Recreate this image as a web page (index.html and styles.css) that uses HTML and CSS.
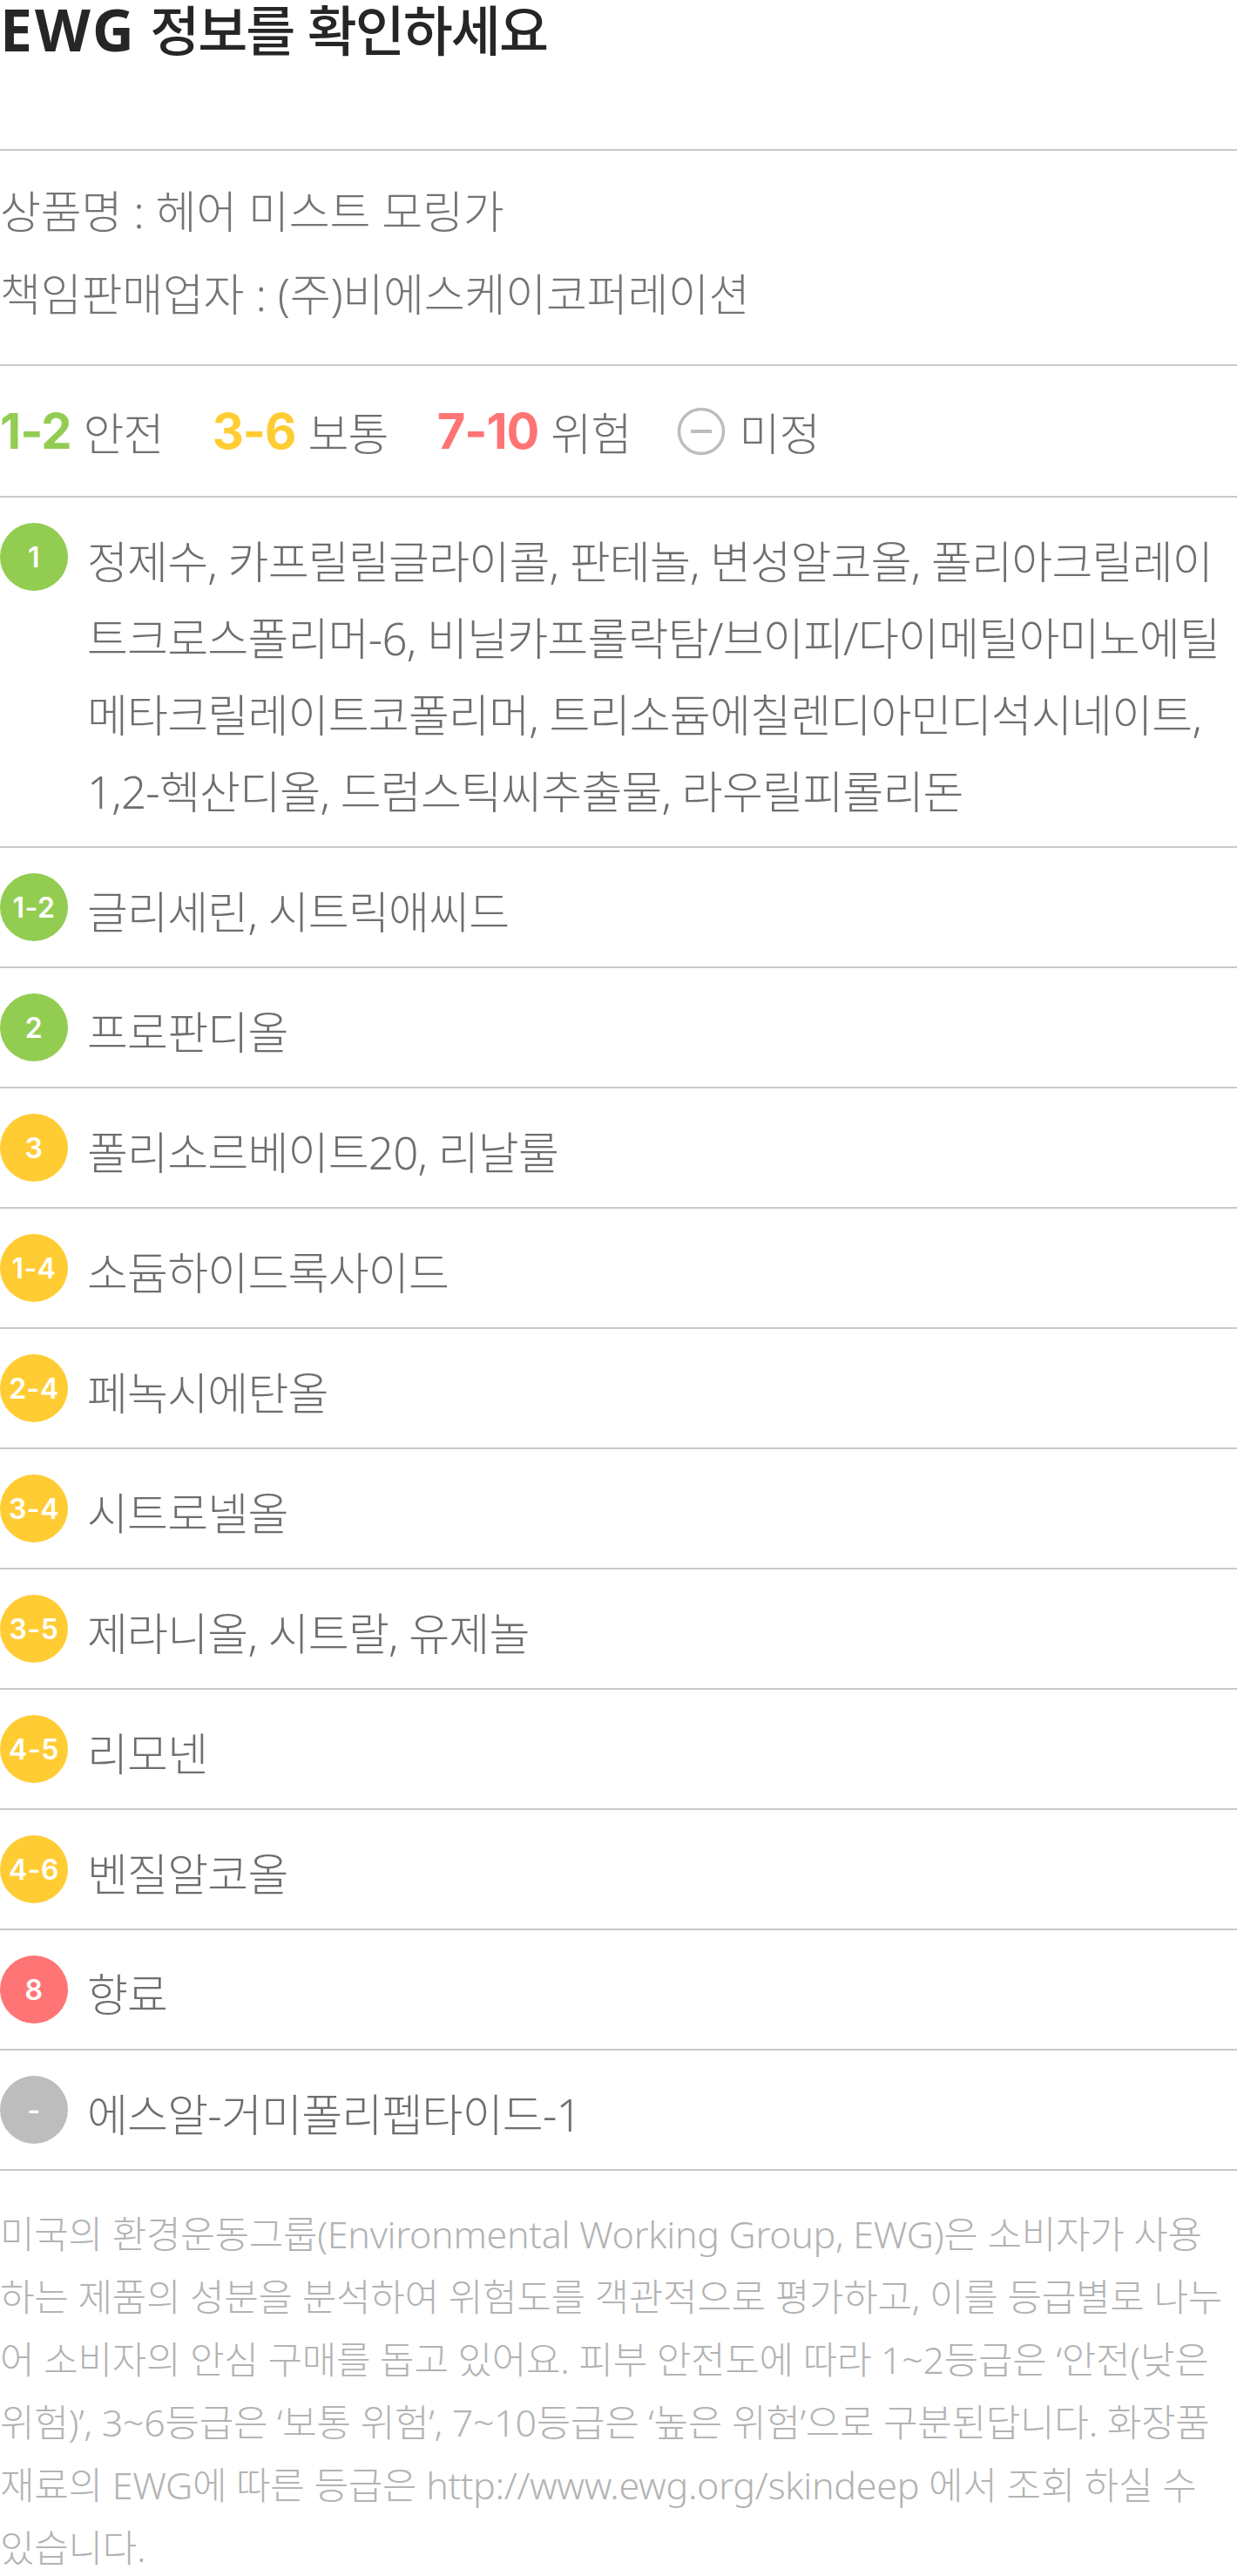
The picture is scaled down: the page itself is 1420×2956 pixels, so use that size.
FILE: index.html
```html
<!DOCTYPE html>
<html lang="ko">
<head>
    <meta charset="UTF-8">
    <meta name="viewport" content="width=device-width, initial-scale=1.0">
    <title>EWG 정보</title>
    <link rel="stylesheet" href="styles.css">
</head>
<body>
    <div class="ewg-page">
        <h1 class="ewg-title"><span class="ewg-title-en">EWG</span> 정보를 확인하세요</h1>

        <div class="product-info">
            <p>상품명 : 헤어 미스트 모링가</p>
            <p>책임판매업자 : (주)비에스케이코퍼레이션</p>
        </div>

        <div class="legend">
            <span class="legend-item"><b class="num green">1-2</b> 안전</span>
            <span class="legend-item"><b class="num yellow">3-6</b> 보통</span>
            <span class="legend-item"><b class="num red">7-10</b> 위험</span>
            <span class="legend-item">
                <svg class="legend-icon" width="56" height="56" viewBox="0 0 56 56">
                    <circle cx="28" cy="28" r="25.5" fill="none" stroke="#bdbdbd" stroke-width="3.5"/>
                    <line x1="16" y1="28" x2="40" y2="28" stroke="#bdbdbd" stroke-width="4"/>
                </svg>
                미정
            </span>
        </div>

        <ul class="ingredients">
            <li class="ing-row">
                <span class="badge bg-green">1</span>
                <p>정제수, 카프릴릴글라이콜, 판테놀, 변성알코올, 폴리아크릴레이트크로스폴리머-6, 비닐카프롤락탐/브이피/다이메틸아미노에틸메타크릴레이트코폴리머, 트리소듐에칠렌디아민디석시네이트, 1,2-헥산디올, 드럼스틱씨추출물, 라우릴피롤리돈</p>
            </li>
            <li class="ing-row">
                <span class="badge bg-green">1-2</span>
                <p>글리세린, 시트릭애씨드</p>
            </li>
            <li class="ing-row">
                <span class="badge bg-green">2</span>
                <p>프로판디올</p>
            </li>
            <li class="ing-row">
                <span class="badge bg-yellow">3</span>
                <p>폴리소르베이트20, 리날룰</p>
            </li>
            <li class="ing-row">
                <span class="badge bg-yellow">1-4</span>
                <p>소듐하이드록사이드</p>
            </li>
            <li class="ing-row">
                <span class="badge bg-yellow">2-4</span>
                <p>페녹시에탄올</p>
            </li>
            <li class="ing-row">
                <span class="badge bg-yellow">3-4</span>
                <p>시트로넬올</p>
            </li>
            <li class="ing-row">
                <span class="badge bg-yellow">3-5</span>
                <p>제라니올, 시트랄, 유제놀</p>
            </li>
            <li class="ing-row">
                <span class="badge bg-yellow">4-5</span>
                <p>리모넨</p>
            </li>
            <li class="ing-row">
                <span class="badge bg-yellow">4-6</span>
                <p>벤질알코올</p>
            </li>
            <li class="ing-row">
                <span class="badge bg-red">8</span>
                <p>향료</p>
            </li>
            <li class="ing-row">
                <span class="badge bg-gray">-</span>
                <p>에스알-거미폴리펩타이드-1</p>
            </li>
        </ul>

        <p class="ewg-note">미국의 환경운동그룹(Environmental Working Group, EWG)은 소비자가 사용하는 제품의 성분을 분석하여 위험도를 객관적으로 평가하고, 이를 등급별로 나누어 소비자의 안심 구매를 돕고 있어요. 피부 안전도에 따라 1~2등급은 ‘안전(낮은 위험)’, 3~6등급은 ‘보통 위험’, 7~10등급은 ‘높은 위험’으로 구분된답니다. 화장품 재료의 EWG에 따른 등급은 http://www.ewg.org/skindeep 에서 조회 하실 수 있습니다.</p>
    </div>
</body>
</html>
```

FILE: styles.css
```css
body {
    margin: 0;
    background-color: #ffffff;
    font-family: "Noto Sans", "Noto Sans CJK KR", sans-serif;
    font-weight: 300;
    color: #707070;
}
.ewg-page {
    width: 1420px;
}
.ewg-title {
    margin: 0;
    padding-bottom: 106px;
    font-family: "Noto Sans CJK KR", sans-serif;
    font-size: 62px;
    line-height: 64px;
    font-weight: 500;
    letter-spacing: -2px;
    color: #262626;
    border-bottom: 2px solid #c9c9c9;
}
.ewg-title-en {
    font-family: "Noto Sans", sans-serif;
    font-weight: 700;
    font-size: 66px;
    letter-spacing: 3px;
}
.product-info {
    padding: 22px 0 33px;
    border-bottom: 2px solid #c9c9c9;
}
.product-info p {
    margin: 0;
    font-size: 51px;
    line-height: 95px;
    letter-spacing: -0.2px;
    color: #747474;
}
.legend {
    display: flex;
    align-items: center;
    gap: 56px;
    padding: 30px 0;
    height: 89px;
    border-bottom: 2px solid #c9c9c9;
    font-size: 51px;
    letter-spacing: -0.8px;
    color: #707070;
}
.legend-item {
    display: flex;
    align-items: center;
    gap: 14px;
}
.num {
    font-family: Inter, sans-serif;
    font-weight: 700;
    font-size: 56px;
    letter-spacing: -1px;
}
.legend-icon {
    display: block;
    margin-left: -4px;
    margin-right: 2px;
}
.green { color: #92cd52; }
.yellow { color: #ffcc33; }
.red { color: #ff7474; }
.ingredients {
    list-style: none;
    margin: 0;
    padding: 0;
}
.ing-row {
    display: flex;
    align-items: flex-start;
    gap: 22px;
    padding: 29px 0 19px;
    border-bottom: 2px solid #c9c9c9;
}
.ing-row p {
    flex: 1;
    margin: 0;
    font-size: 51px;
    line-height: 88px;
    letter-spacing: -0.8px;
    color: #6e6e6e;
}
.badge {
    flex: none;
    width: 78px;
    height: 78px;
    border-radius: 50%;
    display: flex;
    align-items: center;
    justify-content: center;
    font-family: Inter, sans-serif;
    font-weight: 600;
    font-size: 32px;
    letter-spacing: 0.5px;
    color: #ffffff;
}
.bg-green { background-color: #92cd52; }
.bg-yellow { background-color: #ffcc33; }
.bg-red { background-color: #ff7474; }
.bg-gray { background-color: #bdbdbd; }
.ewg-note {
    margin: 0;
    padding: 37px 8px 0 0;
    font-size: 43px;
    line-height: 72px;
    letter-spacing: -0.3px;
    color: #b3b3b3;
}
```
